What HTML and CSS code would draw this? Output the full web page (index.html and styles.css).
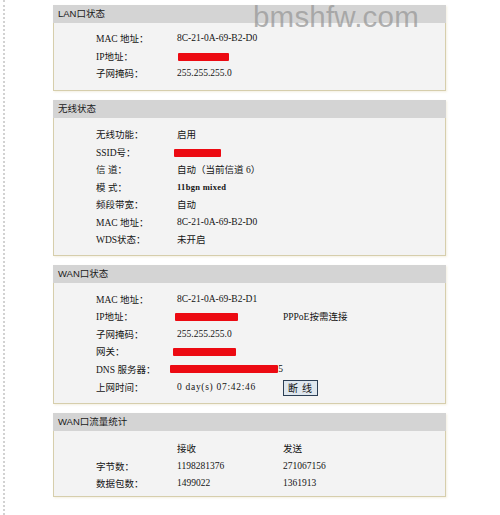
FILE: index.html
```html
<!DOCTYPE html>
<html lang="zh-CN">
<head>
<meta charset="utf-8">
<title>运行状态</title>
<link rel="stylesheet" href="styles.css">
</head>
<body>
<div class="page">
  <div class="watermark">bmshfw.com</div>

  <section class="panel">
    <div class="panel-head">LAN口状态</div>
    <div class="panel-body p-lan">
      <div class="row"><span>MAC 地址：</span><span>8C-21-0A-69-B2-D0</span></div>
      <div class="row"><span>IP地址：</span><span><i class="mask" style="width:51px;margin-left:1px"></i></span></div>
      <div class="row"><span>子网掩码：</span><span>255.255.255.0</span></div>
    </div>
  </section>

  <section class="panel">
    <div class="panel-head">无线状态</div>
    <div class="panel-body p-wlan">
      <div class="row"><span>无线功能：</span><span>启用</span></div>
      <div class="row"><span>SSID号：</span><span><i class="mask" style="width:47px;margin-left:-3px"></i></span></div>
      <div class="row"><span>信 道：</span><span>自动（当前信道 6）</span></div>
      <div class="row"><span>模 式：</span><span class="mode">11bgn mixed</span></div>
      <div class="row"><span>频段带宽：</span><span>自动</span></div>
      <div class="row"><span>MAC 地址：</span><span>8C-21-0A-69-B2-D0</span></div>
      <div class="row"><span>WDS状态：</span><span>未开启</span></div>
    </div>
  </section>

  <section class="panel">
    <div class="panel-head">WAN口状态</div>
    <div class="panel-body p-wan">
      <div class="row"><span>MAC 地址：</span><span>8C-21-0A-69-B2-D1</span></div>
      <div class="row"><span>IP地址：</span><span><i class="mask" style="width:63px;margin-left:-2px"></i></span><span>PPPoE按需连接</span></div>
      <div class="row"><span>子网掩码：</span><span>255.255.255.0</span></div>
      <div class="row"><span>网关：</span><span><i class="mask" style="width:63px;margin-left:-4px"></i></span></div>
      <div class="row"><span>DNS 服务器：</span><span class="dns"><i class="mask" style="width:148px;margin-left:-7px"></i>5</span></div>
      <div class="row"><span>上网时间：</span><span class="uptime">0 day(s) 07:42:46</span><span><button class="btn">断 线</button></span></div>
    </div>
  </section>

  <section class="panel">
    <div class="panel-head">WAN口流量统计</div>
    <div class="panel-body p-stat">
      <div class="row"><span></span><span>接收</span><span>发送</span></div>
      <div class="row"><span>字节数：</span><span>1198281376</span><span>271067156</span></div>
      <div class="row"><span>数据包数：</span><span>1499022</span><span>1361913</span></div>
    </div>
  </section>
</div>
</body>
</html>
```

FILE: styles.css
```css
html, body {
  margin: 0;
  background: #ffffff;
}

body {
  font-family: "Liberation Serif", "Noto Sans CJK SC", serif;
  font-size: 9.5px;
  color: #141414;
}

.page {
  position: relative;
  margin-left: 3px;
  border-left: 2px dotted #d2d2d2;
  min-height: 515px;
  padding: 5px 0 0 48px;
  box-sizing: border-box;
}

/* site stamp laid over the first header */
.watermark {
  position: absolute;
  left: 248px;
  top: 2px;
  line-height: 30px;
  font-family: "Liberation Sans", Arial, sans-serif;
  font-size: 29.5px;
  color: rgba(150, 150, 150, 0.72);
  letter-spacing: 0.2px;
  pointer-events: none;
}

.panel {
  width: 393px;
  margin-bottom: 9px;
  box-shadow: 1px 1px 2px rgba(220, 210, 170, 0.35);
}

.panel-head {
  height: 18px;
  line-height: 18px;
  padding-left: 5px;
  background: #d4d4d4;
  font-family: "Liberation Sans", "Noto Sans CJK SC", sans-serif;
  font-size: 9.5px;
  color: #1a1a1a;
}

.panel-body {
  background: #f3f3f3;
  border: 1px solid #d6ceac;
  border-top: none;
  padding-left: 42px;
}

.p-lan  { padding-top: 6.5px; padding-bottom: 8px; }
.p-wlan { padding-top: 7.5px; padding-bottom: 7px; }
.p-wan  { padding-top: 7px; padding-bottom: 8px; }
.p-stat { padding-top: 8.5px; padding-bottom: 4px; }

.row {
  display: grid;
  grid-template-columns: 81px 106px auto;
  height: 17.5px;
  align-items: center;
  white-space: nowrap;
}

.mode {
  font-weight: bold;
  font-size: 8.5px;
  letter-spacing: 0.3px;
}

.uptime {
  letter-spacing: 0.7px;
}

.mask {
  display: inline-block;
  height: 8px;
  vertical-align: middle;
  background: #ec0a12;
  border-radius: 1px;
}

.dns {
  display: flex;
  align-items: center;
}

.btn {
  font-family: "Noto Sans CJK SC", sans-serif;
  font-size: 10px;
  line-height: 12px;
  width: 35px;
  height: 16px;
  padding: 0;
  margin-top: 2px;
  background: #dfe7ee;
  border: 1px solid #2c3f55;
  color: #111;
  letter-spacing: 1px;
}
```
